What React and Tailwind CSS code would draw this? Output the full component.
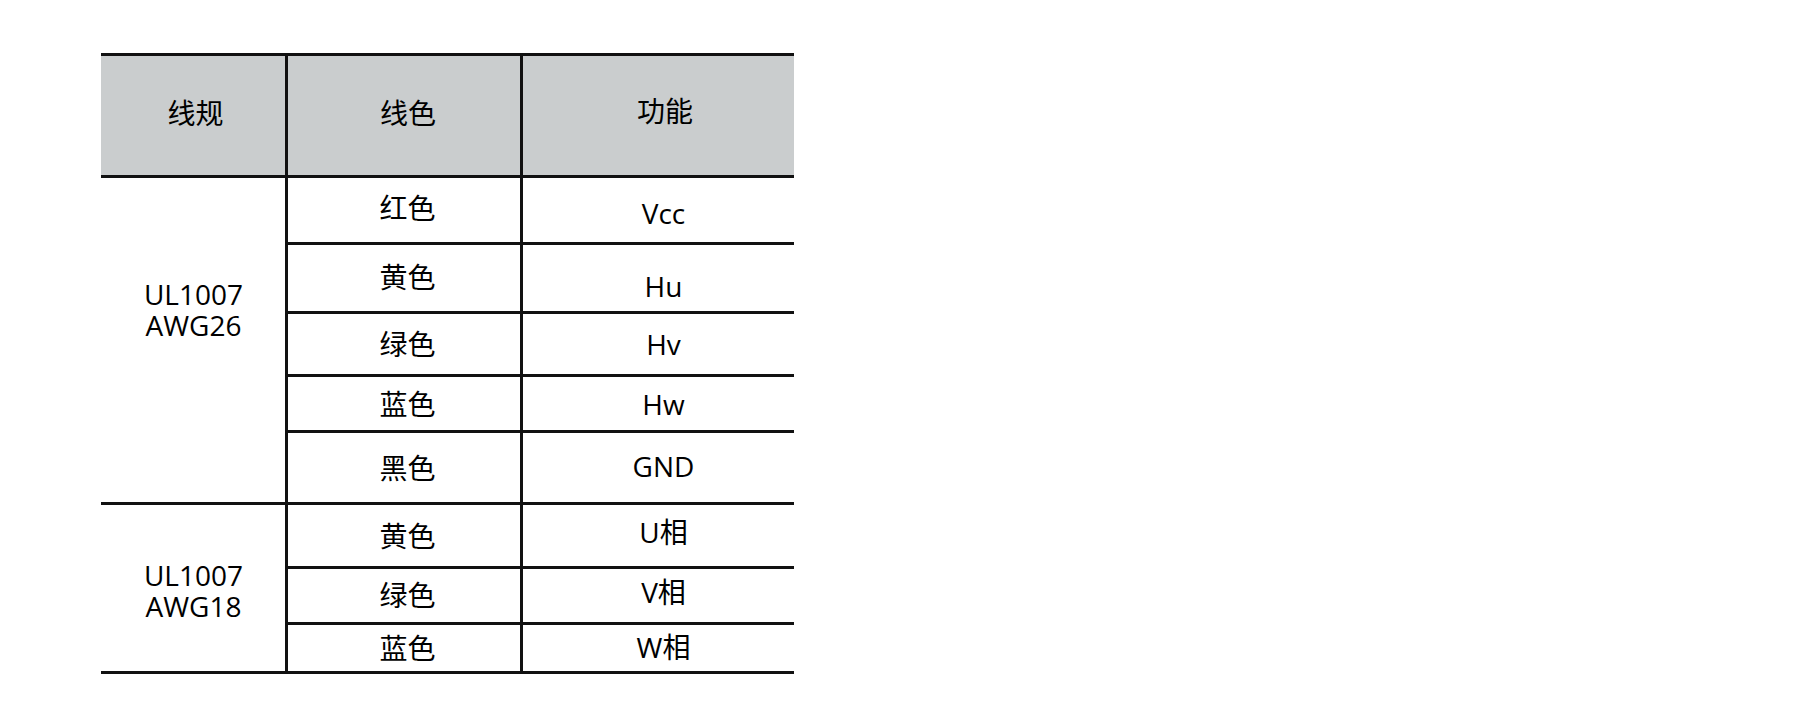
// Wire spec table

const font = { fontFamily: '"Open Sans", "Noto Sans CJK SC", sans-serif' };

const rows = [
  { color: '红色', fn: 'Vcc', h: 'h-[67px]', cPad: 'pb-[5px]', fnPad: 'pt-[6px]' },
  { color: '黄色', fn: 'Hu', h: 'h-[69px]', cPad: 'pb-[2px]', fnPad: 'pt-[16px]' },
  { color: '绿色', fn: 'Hv', h: 'h-[63px]', cPad: '', fnPad: '' },
  { color: '蓝色', fn: 'Hw', h: 'h-[56px]', cPad: '', fnPad: '' },
  { color: '黑色', fn: 'GND', h: 'h-[72px]', cPad: '', fnPad: 'pb-[3px]' },
  { color: '黄色', fn: 'U相', h: 'h-[64px]', cPad: '', fnPad: 'pb-[8px]' },
  { color: '绿色', fn: 'V相', h: 'h-[56px]', cPad: 'pb-[2px]', fnPad: 'pb-[8px]' },
  { color: '蓝色', fn: 'W相', h: 'h-[49px]', cPad: '', fnPad: 'pb-[2px]' },
];

const App = () => {
  return (
    <div className="w-[1800px] h-[726px] bg-white pl-[101px] pt-[53px]" style={font}>
      <div className="grid grid-cols-[184px_235px_274px] text-[28px] leading-[32px] text-black">
        {/* header */}
        <div className="h-[125px] flex items-center justify-center pl-[5px] pb-[6px] bg-[#cacdce] border-t-[3px] border-b-[3px] border-[#111]">线规</div>
        <div className="h-[125px] flex items-center justify-center pl-[8px] pb-[6px] bg-[#cacdce] border-t-[3px] border-b-[3px] border-l-[3px] border-[#111]">线色</div>
        <div className="h-[125px] flex items-center justify-center pl-[13px] pb-[10px] bg-[#cacdce] border-t-[3px] border-b-[3px] border-l-[3px] border-[#111]">功能</div>

        {rows.map((row, i) => (
          <div key={i} className="contents">
            {i === 0 && (
              <div className="row-span-5 flex items-center justify-center pl-[1px] pb-[60px] border-b-[3px] border-[#111]">
                <p className="text-center leading-[31px]">UL1007<br />AWG26</p>
              </div>
            )}
            {i === 5 && (
              <div className="row-span-3 flex items-center justify-center pl-[1px] pt-[6px] border-b-[3px] border-[#111]">
                <p className="text-center leading-[31px]">UL1007<br />AWG18</p>
              </div>
            )}
            <div className={`${row.h} ${row.cPad} flex items-center justify-center pl-[7px] border-l-[3px] border-b-[3px] border-[#111]`}>
              {row.color}
            </div>
            <div className={`${row.h} ${row.fnPad} flex items-center justify-center pl-[10px] border-l-[3px] border-b-[3px] border-[#111]`}>
              {row.fn}
            </div>
          </div>
        ))}
      </div>
    </div>
  );
};

export default App;
